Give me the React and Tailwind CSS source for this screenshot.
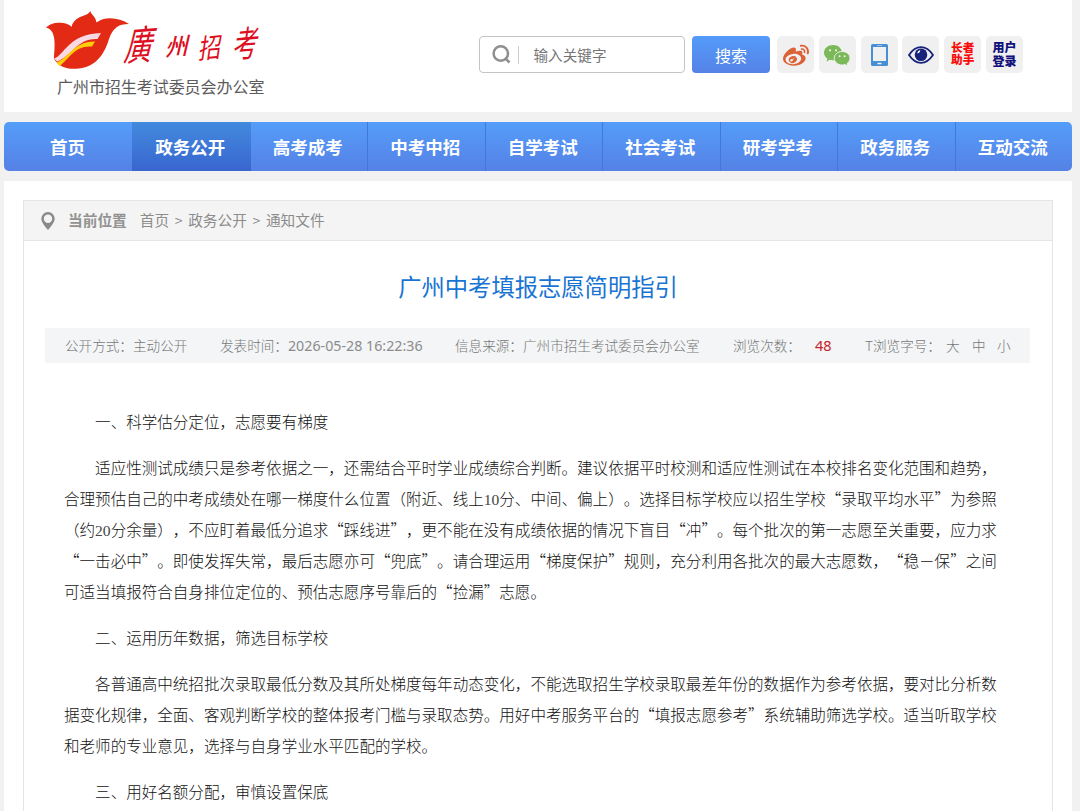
import React from "react";
import { FaWeibo } from "react-icons/fa";

const NAV = ["政务公开", "高考成考", "中考中招", "自学考试", "社会考试", "研考学考", "政务服务", "互动交流"];

// indent: opens a paragraph; gap: space above
const LINES = [
  { t: "一、科学估分定位，志愿要有梯度", indent: true },
  { t: "适应性测试成绩只是参考依据之一，还需结合平时学业成绩综合判断。建议依据平时校测和适应性测试在本校排名变化范围和趋势，", indent: true, gap: true },
  { t: "合理预估自己的中考成绩处在哪一梯度什么位置（附近、线上10分、中间、偏上）。选择目标学校应以招生学校“录取平均水平”为参照" },
  { t: "（约20分余量），不应盯着最低分追求“踩线进”，更不能在没有成绩依据的情况下盲目“冲”。每个批次的第一志愿至关重要，应力求" },
  { t: "“一击必中”。即使发挥失常，最后志愿亦可“兜底”。请合理运用“梯度保护”规则，充分利用各批次的最大志愿数，“稳－保”之间" },
  { t: "可适当填报符合自身排位定位的、预估志愿序号靠后的“捡漏”志愿。" },
  { t: "二、运用历年数据，筛选目标学校", indent: true, gap: true },
  { t: "各普通高中统招批次录取最低分数及其所处梯度每年动态变化，不能选取招生学校录取最差年份的数据作为参考依据，要对比分析数", indent: true, gap: true },
  { t: "据变化规律，全面、客观判断学校的整体报考门槛与录取态势。用好中考服务平台的“填报志愿参考”系统辅助筛选学校。适当听取学校" },
  { t: "和老师的专业意见，选择与自身学业水平匹配的学校。" },
  { t: "三、用好名额分配，审慎设置保底", indent: true, gap: true },
];

function Line({ t, indent, gap }) {
  return (
    <p className={`h-[31.1px] whitespace-nowrap ${indent ? "pl-[31.1px]" : ""} ${gap ? "mt-[14.6px]" : ""}`}>
      {t.split(/(\d+)/).map((s, i) =>
        /^\d/.test(s) ? <span key={i} className="font-['Liberation_Serif',serif] text-[#444]">{s}</span> : s
      )}
    </p>
  );
}

function Logo() {
  return (
    <svg width="230" height="66" viewBox="40 5 230 66" className="block overflow-visible">
      <path d="M46 27.500C50 23 58 22 63 23C67 23.500 70 25 71.500 27C73 20 79 17 84 15.500C87 14.500 89 13 90.500 11C91 15 95.500 16 96.500 22.500C104 16 119 17 129 24C118 24 113 28 109 39C105 52 97 67 79 68.500C68 70 59 67 54 59C54 51 58 30 46 27.500Z" fill="#e32a14" />
      <path d="M54 58.500C64 56 68 34 101 33L97.500 39C77 38 72 56 57 61.500Z" fill="#f9d9e4" />
      <path d="M56.500 62.500C69 58 74 41 95 41.500L92 46.500C75 45 70 58 59.500 66Z" fill="#ffce0a" />
      <g fill="#dd0f22" fontFamily="'Noto Sans CJK TC','Noto Sans CJK SC',sans-serif">
        <text transform="translate(123 61) rotate(-4) skewX(-18) scale(.74 1.060)" fontSize="38">廣</text>
        <text transform="translate(165 56) rotate(-5) skewX(-18)" fontSize="23" fontWeight="500">州</text>
        <text transform="translate(198 59) rotate(-6) skewX(-14) scale(.84 1)" fontSize="27">招</text>
        <text transform="translate(232 58) rotate(-5) skewX(-14) scale(.76 1.080)" fontSize="33">考</text>
      </g>
    </svg>
  );
}

function Tile({ children }) {
  return <div className="flex size-[37px] items-center justify-center rounded-[5px] bg-[#f0f0f0]">{children}</div>;
}

function WeChat() {
  return (
    <svg width="27" height="22" viewBox="0 0 27 22" className="mt-[2px]">
      <path d="M9 0C4 0 0 3.4 0 7.7c0 2.4 1.3 4.4 3.4 5.9L2.6 16.400l3.200-1.600c1 .3 2.100.5 3.200.5 5 0 9-3.400 9-7.600S14 0 9 0Z" fill="#7ab858" />
      <path d="M18.200 6.500c-4.500 0-8 3-8 6.700s3.500 6.800 8 6.800c1 0 1.900-.2 2.700-.4l3 1.500-.8-2.600c1.800-1.300 2.900-3.200 2.900-5.300 0-3.700-3.300-6.700-7.800-6.700Z" fill="#7ab858" stroke="#f0f0f0" />
      <g fill="#f0f0f0"><circle cx="6" cy="5.300" r="1.100" /><circle cx="12" cy="5.300" r="1.100" /><circle cx="15.600" cy="11.300" r="1" /><circle cx="20.600" cy="11.300" r="1" /></g>
    </svg>
  );
}

export default function App() {
  return (
    <div lang="zh-CN" className="flex h-[811px] flex-col overflow-hidden bg-[#f1f1f1] pl-1 pr-2 font-['Noto_Sans_CJK_SC',sans-serif] [text-spacing-trim:space-all]">
      <header className="flex h-[112px] shrink-0 justify-between bg-white pr-[49px]">
        <div className="pl-9 pt-[5px]">
          <Logo />
          <div className="pl-[17px] pt-[3px] text-[16px] leading-6 tracking-[-0.05px] text-[#5c5c5c]">广州市招生考试委员会办公室</div>
        </div>
        <div className="flex pt-9">
          <div className="mr-[7.500px] flex h-[37px] w-[206px] items-center rounded-[4px] border border-[#c4c4c4] pl-3">
            <svg width="19" height="19" viewBox="0 0 19 19" fill="none" stroke="#8f8f8f" strokeWidth="2.500">
              <circle cx="8.800" cy="8.500" r="7.200" /><path d="m13 13 4.500 4.500" />
            </svg>
            <i className="ml-[7px] h-[18px] w-px bg-[#ccc]" />
            <span className="ml-[15px] text-[14.600px] text-[#757575]">输入关键字</span>
          </div>
          <button className="h-[37px] w-[78px] rounded-[4px] bg-gradient-to-b from-[#549bf9] to-[#5582e6] text-[16px] text-white">搜索</button>
          <div className="ml-[7px] flex gap-[4.800px]">
            <Tile><FaWeibo size={26} color="#dc6237" className="mt-[2px]" /></Tile>
            <Tile><WeChat /></Tile>
            <Tile>
              <svg width="17" height="22" viewBox="0 0 17 22">
                <rect width="17" height="22" rx="1.500" fill="#468fd4" /><path d="M2 3h13v14H2zM6.500 18.800h4v1.500h-4zM6 1.200h5v.6H6z" fill="#f0f0f0" />
              </svg>
            </Tile>
            <Tile>
              <svg width="26" height="18" viewBox="0 0 26 18">
                <path d="M1 9C5 3 9 1.200 13 1.200S21 3 25 9c-4 6-8 7.800-12 7.800S5 15 1 9Z" fill="#f0f0f0" stroke="#17237a" strokeWidth="1.800" />
                <circle cx="13" cy="8.700" r="6.300" fill="#17237a" /><path d="M9.300 7.500c.2-2 1.400-3.100 3-3.200-.2 1.700-1.200 2.900-3 3.200Z" fill="#fff" />
              </svg>
            </Tile>
            <Tile><div className="-mt-[3px] text-[11.700px] font-black leading-[12.300px] text-[#fa0b0b]">长者<br />助手</div></Tile>
            <Tile><div className="-mt-[2px] text-[12px] font-black leading-[14px] text-[#10107c]">用户<br />登录</div></Tile>
          </div>
        </div>
      </header>

      <nav className="mt-[10px] flex h-[49px] shrink-0 overflow-hidden rounded-[5px] bg-gradient-to-b from-[#549df9] to-[#5581e5] text-[17.500px] font-bold text-white">
        <a className="flex w-32 items-center justify-center pr-[1px] pt-[1px]">首页</a>
        {NAV.map((n, i) => (
          <a key={n} className={`flex items-center justify-center pt-[1px] ${i === 0 ? "w-[118.500px] bg-gradient-to-b from-[#438ade] to-[#3966cf] pr-[2px]" : i === 1 ? "w-[116.500px] pr-[2px]" : "w-[117.500px] border-l border-[#4478d5] pr-[2px]"}`}>{n}</a>
        ))}
      </nav>

      <main className="mt-[10px] flex-1 bg-white pl-[19px] pr-[19px] pt-[19px]">
        <div className="h-full border border-b-0 border-[#e5e5e5]">
          <div className="flex h-10 items-center border-b border-[#e5e5e5] bg-[#f4f4f4] pl-[17px] text-[14.700px] text-[#8c8c8c]">
            <svg width="14" height="18" viewBox="0 0 14 18"><path fillRule="evenodd" d="M7 0a6.700 6.700 0 0 1 6.700 6.700C13.700 10 9.700 15 7 18 4.300 15 .3 10 .3 6.700A6.700 6.700 0 0 1 7 0Zm0 2.500a4.200 4.200 0 1 0 0 8.400 4.200 4.200 0 0 0 0-8.400Z" fill="#8a8a8a" /></svg>
            <b className="ml-[13px] font-bold text-[#929292]">当前位置</b>
            <span className="ml-[13px]">首页</span>
            <span className="w-[19px] text-center text-[14px]">&gt;</span>
            <span>政务公开</span>
            <span className="w-[19px] text-center text-[14px]">&gt;</span>
            <span>通知文件</span>
          </div>
          <h1 className="mt-[28px] text-center text-[23.300px] leading-[35px] text-[#1874d2]">广州中考填报志愿简明指引</h1>
          <div className="ml-[21px] mr-[22px] mt-6 flex h-[35px] items-center whitespace-nowrap bg-[#f3f5f6] pl-5 text-[13.600px] font-light text-[#777]">
            <span className="w-[155px]">公开方式：主动公开</span>
            <span className="w-[235px]">发表时间：<span className="font-['Noto_Sans'] text-[14.250px] font-normal text-[#8c8c8c]">2026-05-28 16:22:36</span></span>
            <span className="w-[278px]">信息来源：广州市招生考试委员会办公室</span>
            <span className="w-[82px]">浏览次数：</span>
            <span className="w-[50px] font-['Noto_Sans'] text-[14.500px] font-normal text-[#c8232b]">48</span>
            <span className="w-[81px]">T浏览字号：</span>
            <span className="w-[26px]">大</span><span className="w-[25px]">中</span><span>小</span>
          </div>
          <article className="ml-10 mt-[43.400px] text-[15.550px] font-light leading-[31.100px] text-[#111]">
            {LINES.map((l) => <Line key={l.t} {...l} />)}
          </article>
        </div>
      </main>
    </div>
  );
}
